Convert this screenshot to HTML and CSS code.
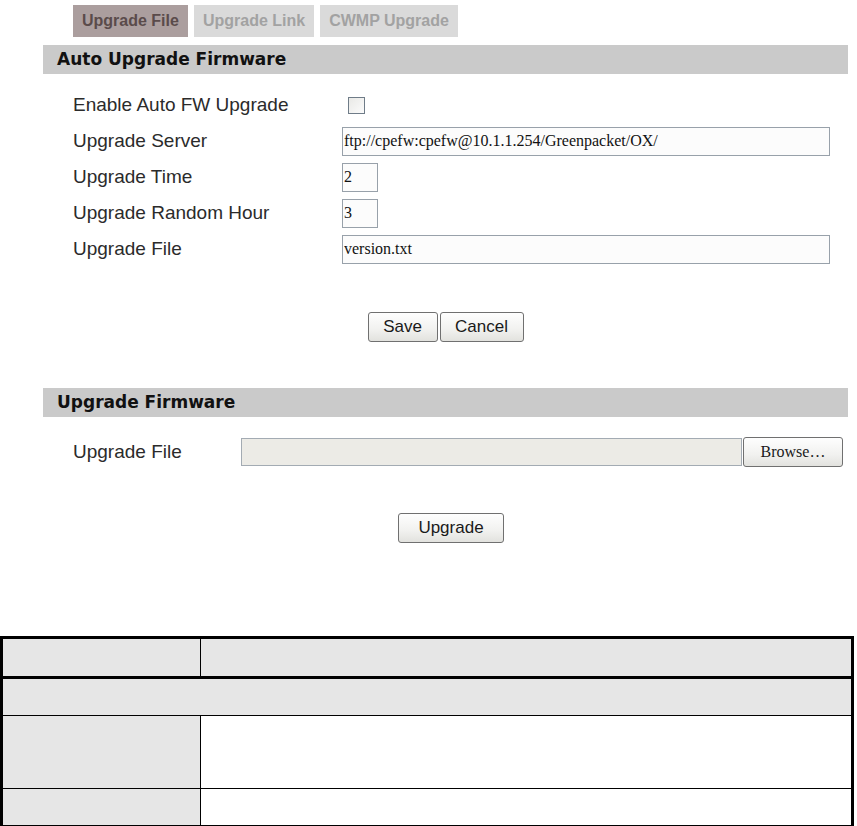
FILE: index.html
```html
<!DOCTYPE html>
<html lang="en">
<head>
    <meta charset="UTF-8">
    <meta name="viewport" content="width=device-width, initial-scale=1.0">
    <title>Firmware Upgrade</title>
    <link rel="stylesheet" href="styles.css">
</head>
<body>
    <div class="page">
        <div class="panel">
            <div class="tabs">
                <div class="tab active">Upgrade File</div>
                <div class="tab">Upgrade Link</div>
                <div class="tab">CWMP Upgrade</div>
            </div>

            <div class="sectionHead">Auto Upgrade Firmware</div>
            <form class="formGrid" action="">
                <label>Enable Auto FW Upgrade</label>
                <div><input type="checkbox" class="check"></div>
                <label>Upgrade Server</label>
                <div><input type="text" class="field wide" value="ftp://cpefw:cpefw@10.1.1.254/Greenpacket/OX/"></div>
                <label>Upgrade Time</label>
                <div><input type="text" class="field small" value="2"></div>
                <label>Upgrade Random Hour</label>
                <div><input type="text" class="field small" value="3"></div>
                <label>Upgrade File</label>
                <div><input type="text" class="field wide" value="version.txt"></div>
            </form>
            <div class="actions">
                <button class="btn save">Save</button>
                <button class="btn cancel">Cancel</button>
            </div>

            <div class="sectionHead second">Upgrade Firmware</div>
            <div class="fileRow">
                <label>Upgrade File</label>
                <input type="text" class="field fileBox" value="">
                <button class="btn browse">Browse…</button>
            </div>
            <div class="actions upgradeRow">
                <button class="btn upgrade">Upgrade</button>
            </div>
        </div>

        <table class="paramTable">
            <colgroup>
                <col class="colName">
                <col>
            </colgroup>
            <tr class="headRow">
                <td class="grey"></td>
                <td class="grey"></td>
            </tr>
            <tr class="groupRow">
                <td class="grey" colspan="2"></td>
            </tr>
            <tr class="tallRow">
                <td class="grey"></td>
                <td></td>
            </tr>
            <tr class="lastRow">
                <td class="grey"></td>
                <td></td>
            </tr>
        </table>
    </div>
</body>
</html>
```

FILE: styles.css
```css
* {
    margin: 0;
    padding: 0;
    box-sizing: border-box;
}

body {
    background: #ffffff;
    font-family: "Liberation Sans", Arial, sans-serif;
    color: #2b2b2b;
}

.page {
    width: 857px;
}

.panel {
    margin-left: 43px;
    width: 805px;
}

/* tabs */
.tabs {
    display: flex;
    gap: 6px;
    padding-top: 5px;
    margin-left: 30px;
}

.tab {
    height: 32px;
    line-height: 32px;
    padding: 0px 9px;
    font-size: 16px;
    font-weight: bold;
    background: #dadada;
    color: #a2a2a2;
}

.tab.active {
    background: #ab9e9e;
    color: #5a4b4b;
}

.sectionHead {
    margin-top: 8px;
    height: 29px;
    line-height: 29px;
    padding-left: 14px;
    background: #cacaca;
    font-family: "DejaVu Sans", Verdana, sans-serif;
    font-weight: bold;
    font-size: 17px;
    color: #111111;
}

.sectionHead.second {
    margin-top: 46px;
}

/* auto upgrade form */
.formGrid {
    margin-top: 13px;
    padding-left: 30px;
    display: grid;
    grid-template-columns: 269px 1fr;
    grid-auto-rows: 36px;
    align-items: center;
}

label {
    font-size: 19px;
    color: #2b2b2b;
}

.formGrid div {
    display: flex;
    align-items: center;
}

.check {
    appearance: none;
    -webkit-appearance: none;
    width: 17px;
    height: 17px;
    margin-left: 6px;
    border: 1px solid #6f7c88;
    background: linear-gradient(135deg, #e9e9e6, #fbfbfb);
}

.field {
    height: 29px;
    border: 1px solid #98a1aa;
    background: #fcfcfc;
    font-family: "Liberation Serif", "Times New Roman", serif;
    font-size: 16px;
    color: #111111;
    padding: 0px 1px;
    outline: none;
}

.field.wide {
    width: 488px;
}

.field.small {
    width: 36px;
}

/* buttons */
.actions {
    margin-top: 45px;
    display: flex;
    justify-content: center;
    gap: 2px;
}

.btn {
    height: 30px;
    border: 1px solid #707070;
    border-radius: 3px;
    background: linear-gradient(#fefefe, #f1f1ef 60%, #e2e2de);
    font-family: "Liberation Sans", Arial, sans-serif;
    font-size: 17px;
    color: #1a1a1a;
}

.save {
    width: 70px;
}

.cancel {
    width: 84px;
}

/* upgrade firmware */
.fileRow {
    margin-top: 20px;
    padding-left: 30px;
    display: flex;
    align-items: center;
    height: 30px;
}

.fileRow label {
    width: 168px;
}

.fileBox {
    width: 501px;
    height: 28px;
    background: #ecebe6;
    border-color: #a3abb3;
}

.browse {
    width: 100px;
    font-family: "Liberation Serif", "Times New Roman", serif;
    font-size: 16px;
    margin-left: 1px;
}

.upgradeRow {
    margin-top: 46px;
    padding-left: 11px;
}

.upgrade {
    width: 106px;
}

/* parameter table */
.paramTable {
    margin-top: 93px;
    width: 854px;
    table-layout: fixed;
    border-collapse: separate;
    border-spacing: 0;
    border: 3px solid #000000;
}

.colName {
    width: 198px;
}

.paramTable td {
    border-bottom: 1px solid #000000;
    padding: 0;
}

.paramTable td:first-child {
    border-right: 1px solid #000000;
}

.paramTable td[colspan] {
    border-right: none;
}

.grey {
    background: #e6e6e6;
}

.headRow td {
    height: 40px;
    border-bottom: 3px solid #000000;
}

.groupRow td {
    height: 37px;
}

.tallRow td {
    height: 73px;
}

.lastRow td {
    height: 36px;
    border-bottom: none;
}
```
